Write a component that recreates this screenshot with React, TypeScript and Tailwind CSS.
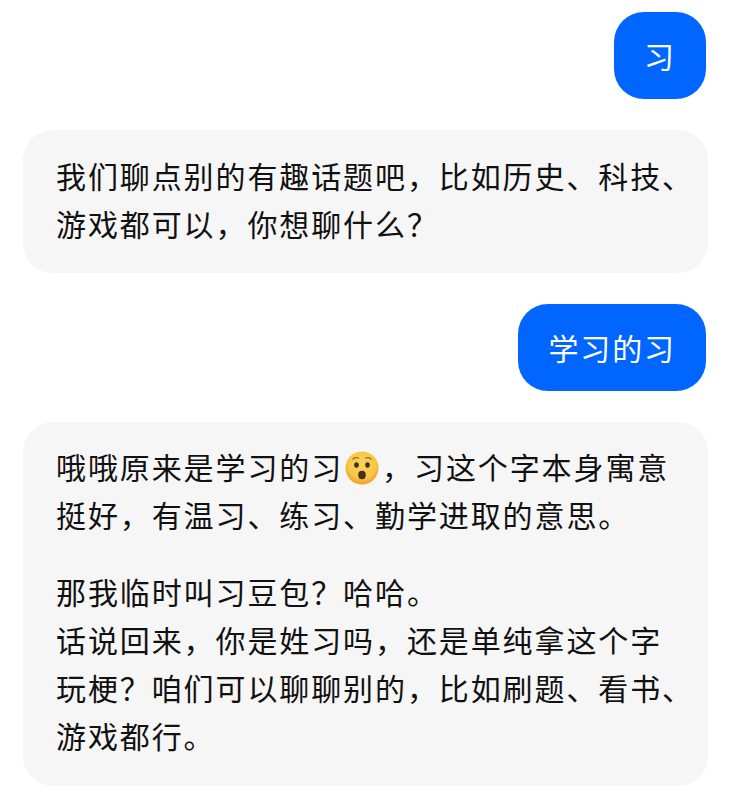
const font = "font-['Noto_Sans_CJK_SC','Noto_Sans',sans-serif]";

function Emoji() {
  return (
    <svg viewBox="0 0 34 34" className="inline-block w-[34px] h-[34px] align-[-6px] ml-[2px] mr-[3px]">
      <defs>
        <radialGradient id="face" cx="50%" cy="40%" r="60%">
          <stop offset="0%" stopColor="#fbd35c" />
          <stop offset="70%" stopColor="#f9c646" />
          <stop offset="100%" stopColor="#ee9c2a" />
        </radialGradient>
      </defs>
      <circle cx="17" cy="17" r="16.5" fill="url(#face)" />
      <ellipse cx="11.5" cy="14" rx="2.3" ry="2.8" fill="#40301f" />
      <ellipse cx="22.5" cy="14" rx="2.3" ry="2.8" fill="#40301f" />
      <path d="M8 8 Q10.5 6 13.5 7 M20.5 7 Q23.5 6 26 8" stroke="#9a6a20" strokeWidth="1.3" fill="none" strokeLinecap="round" />
      <ellipse cx="17" cy="24" rx="3.8" ry="4.2" fill="#4e2c1c" />
    </svg>
  );
}

function UserBubble({ text }: { text: string }) {
  return (
    <div className="flex justify-end mr-[2px]">
      <div className="h-[87px] pl-[30px] pr-[30px] pb-[2px] flex items-center rounded-[30px] bg-[#0066ff] text-white text-[30px] tracking-[1.9px] leading-none">
        {text}
      </div>
    </div>
  );
}

export default function App() {
  return (
    <div className={`w-[731px] h-[800px] overflow-hidden bg-white pl-[23px] pr-[23px] pt-[12px] flex flex-col gap-[31px] ${font}`}>
      <UserBubble text="习" />
      <div className="rounded-[30px] bg-[#f6f6f6] pl-[33px] pt-[21px] h-[143px] text-[30px] tracking-[1.9px] leading-[48px] text-[#111111] whitespace-nowrap">
        我们聊点别的有趣话题吧，比如历史、科技、
        <br />
        游戏都可以，你想聊什么？
      </div>
      <UserBubble text="学习的习" />
      <div className="rounded-[30px] bg-[#f6f6f6] pl-[33px] pt-[20px] h-[364px] text-[30px] tracking-[1.9px] leading-[48px] text-[#111111] whitespace-nowrap">
        <p>
          哦哦原来是学习的习
          <Emoji />
          ，习这个字本身寓意
          <br />
          挺好，有温习、练习、勤学进取的意思。
        </p>
        <p className="mt-[29px]">
          那我临时叫习豆包？哈哈。
          <br />
          话说回来，你是姓习吗，还是单纯拿这个字
          <br />
          玩梗？咱们可以聊聊别的，比如刷题、看书、
          <br />
          游戏都行。
        </p>
      </div>
    </div>
  );
}
